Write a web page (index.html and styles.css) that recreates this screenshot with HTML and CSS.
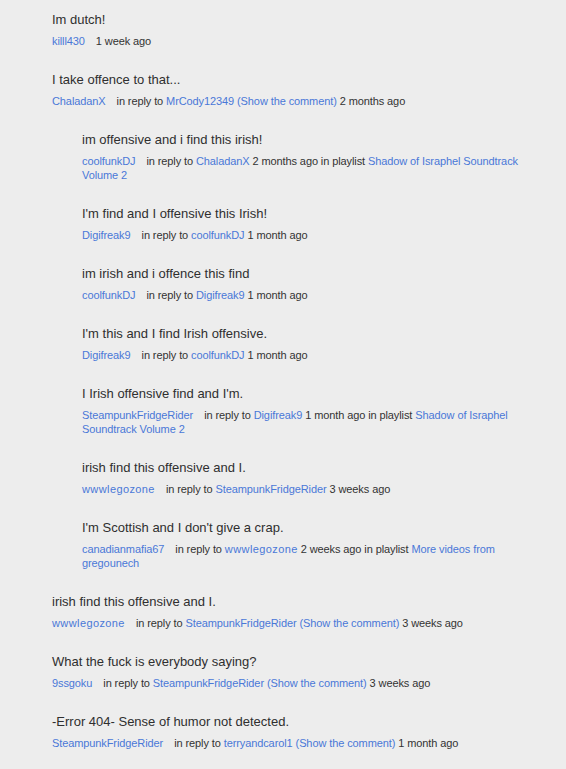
FILE: index.html
```html
<!DOCTYPE html>
<html>
<head>
<meta charset="utf-8">
<link rel="stylesheet" href="styles.css">
</head>
<body>
<div class="comments">
  <div class="comment">
    <div class="text">Im dutch!</div>
    <div class="meta"><a class="user">killl430</a>1 week ago</div>
  </div>
  <div class="comment">
    <div class="text">I take offence to that...</div>
    <div class="meta"><a class="user">ChaladanX</a>in reply to <a>MrCody12349</a> <a>(Show the comment)</a> 2 months ago</div>
  </div>
  <div class="comment reply">
    <div class="text">im offensive and i find this irish!</div>
    <div class="meta"><a class="user">coolfunkDJ</a>in reply to <a>ChaladanX</a> 2 months ago in playlist <a>Shadow of Israphel Soundtrack</a> <a>Volume 2</a></div>
  </div>
  <div class="comment reply">
    <div class="text">I'm find and I offensive this Irish!</div>
    <div class="meta"><a class="user">Digifreak9</a>in reply to <a>coolfunkDJ</a> 1 month ago</div>
  </div>
  <div class="comment reply">
    <div class="text">im irish and i offence this find</div>
    <div class="meta"><a class="user">coolfunkDJ</a>in reply to <a>Digifreak9</a> 1 month ago</div>
  </div>
  <div class="comment reply">
    <div class="text">I'm this and I find Irish offensive.</div>
    <div class="meta"><a class="user">Digifreak9</a>in reply to <a>coolfunkDJ</a> 1 month ago</div>
  </div>
  <div class="comment reply">
    <div class="text">I Irish offensive find and I'm.</div>
    <div class="meta"><a class="user">SteampunkFridgeRider</a>in reply to <a>Digifreak9</a> 1 month ago in playlist <a>Shadow of Israphel</a> <a>Soundtrack Volume 2</a></div>
  </div>
  <div class="comment reply">
    <div class="text">irish find this offensive and I.</div>
    <div class="meta"><a class="user wide">wwwlegozone</a>in reply to <a>SteampunkFridgeRider</a> 3 weeks ago</div>
  </div>
  <div class="comment reply">
    <div class="text">I'm Scottish and I don't give a crap.</div>
    <div class="meta"><a class="user">canadianmafia67</a>in reply to <a class="wide">wwwlegozone</a> 2 weeks ago in playlist <a>More videos from</a> <a>gregounech</a></div>
  </div>
  <div class="comment">
    <div class="text">irish find this offensive and I.</div>
    <div class="meta"><a class="user wide">wwwlegozone</a>in reply to <a>SteampunkFridgeRider</a> <a>(Show the comment)</a> 3 weeks ago</div>
  </div>
  <div class="comment">
    <div class="text">What the fuck is everybody saying?</div>
    <div class="meta"><a class="user">9ssgoku</a>in reply to <a>SteampunkFridgeRider</a> <a>(Show the comment)</a> 3 weeks ago</div>
  </div>
  <div class="comment">
    <div class="text">-Error 404- Sense of humor not detected.</div>
    <div class="meta"><a class="user">SteampunkFridgeRider</a>in reply to <a>terryandcarol1</a> <a>(Show the comment)</a> 1 month ago</div>
  </div>
</div>
</body>
</html>
```
FILE: styles.css
```css
html, body {
  margin: 0;
  padding: 0;
  background: #ededed;
}
body {
  font-family: "Liberation Sans", Arial, sans-serif;
  color: #333;
}
.comments {
  padding: 11px 20px 0 52px;
  display: flex;
  flex-direction: column;
  gap: 23px;
}
.comment.reply {
  padding-left: 30px;
}
.text {
  font-size: 13px;
  line-height: 18px;
  color: #2f2f2f;
}
.meta {
  margin-top: 5px;
  font-size: 11px;
  line-height: 14px;
  letter-spacing: -0.1px;
  color: #333;
}
.meta a {
  color: #4a78d8;
  text-decoration: none;
}
.meta .user {
  margin-right: 11px;
}
.meta .wide {
  letter-spacing: 0.4px;
}
```
